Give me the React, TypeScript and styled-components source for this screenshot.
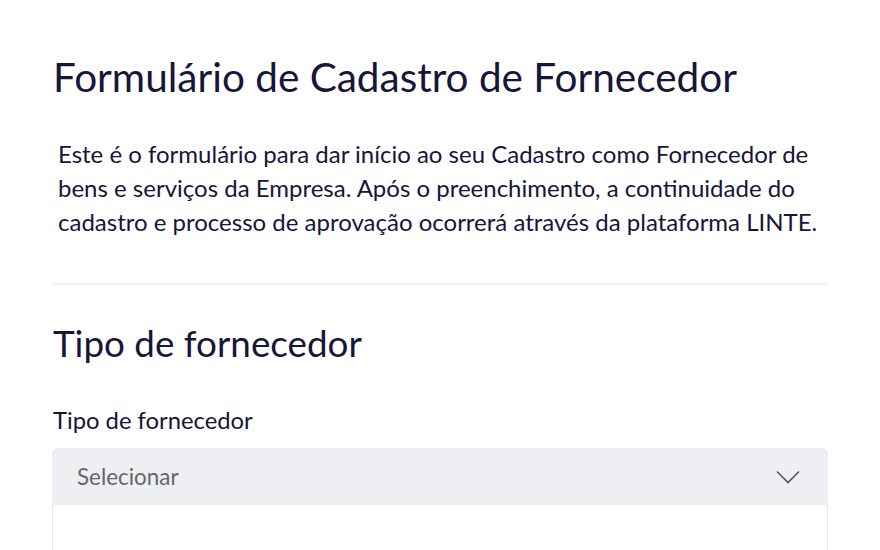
import styled, { createGlobalStyle } from 'styled-components';

const GlobalStyle = createGlobalStyle`
  html, body {
    margin: 0;
    padding: 0;
    background: #ffffff;
    font-family: Lato, "Open Sans", sans-serif;
    color: #17153a;
  }
`;

const StyledPage = styled.main`
  width: 776px;
  height: 550px;
  padding: 47px 52px 0 52px;
  overflow: hidden;
`;

const StyledTitle = styled.h1`
  margin: 0 0 0 1px;
  font-size: 40.5px;
  font-weight: 400;
  line-height: 60px;
`;

const StyledIntro = styled.p`
  margin: 30px 0 0 6px;
  font-size: 24px;
  line-height: 34px;
`;

const StyledDivider = styled.hr`
  border: 0;
  height: 2px;
  background: #f2f2f3;
  margin: 44px 0 0 0;
`;

const StyledSectionTitle = styled.h2`
  margin: 34px 0 0 1px;
  font-size: 36.8px;
  font-weight: 400;
  line-height: 48px;
`;

const StyledLabel = styled.label`
  display: block;
  margin: 37px 0 0 1px;
  font-size: 23.8px;
  line-height: 32px;
`;

const StyledSelect = styled.div`
  margin-top: 12px;
  display: flex;
  align-items: center;
  justify-content: space-between;
  height: 57px;
  padding: 0 28px 0 25px;
  background: #eeeff2;
  border-radius: 6px 6px 0 0;
  font-size: 22.4px;
  color: #666;
`;

const StyledDropdown = styled.div`
  height: 60px;
  border: 1px solid #eaeaec;
  border-top: 0;
  background: #fff;
`;

const Chevron = () => (
  <svg width="24" height="14" viewBox="0 0 24 14" fill="none">
    <path d="M1 1.5 L12 12.5 L23 1.5" stroke="#555" strokeWidth="1.6" />
  </svg>
);

const App = () => {
  return (
    <>
      <GlobalStyle />
      <StyledPage>
        <StyledTitle>Formulário de Cadastro de Fornecedor</StyledTitle>
        <StyledIntro>
          Este é o formulário para dar início ao seu Cadastro como Fornecedor de bens e serviços da
          Empresa. Após o preenchimento, a continuidade do cadastro e processo de aprovação
          ocorrerá através da plataforma LINTE.
        </StyledIntro>
        <StyledDivider />
        <StyledSectionTitle>Tipo de fornecedor</StyledSectionTitle>
        <StyledLabel>Tipo de fornecedor</StyledLabel>
        <StyledSelect>
          <span>Selecionar</span>
          <Chevron />
        </StyledSelect>
        <StyledDropdown />
      </StyledPage>
    </>
  );
};

export default App;
